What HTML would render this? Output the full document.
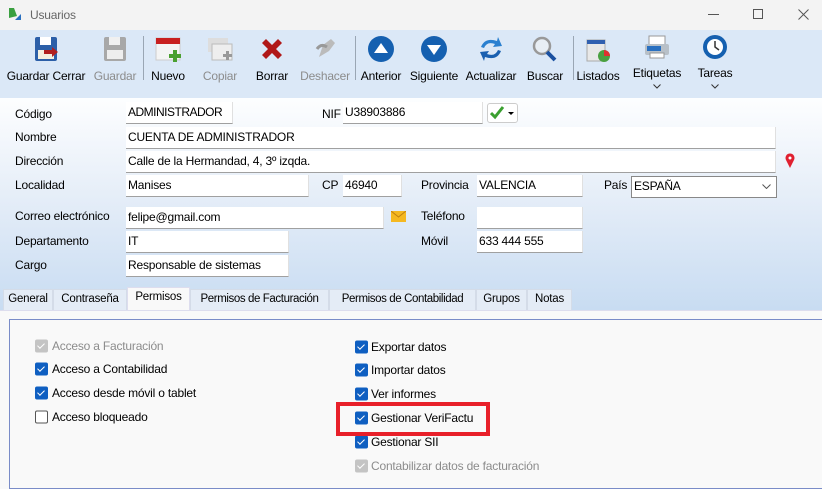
<!DOCTYPE html>
<html><head><meta charset="utf-8"><style>
*{margin:0;padding:0;box-sizing:border-box}
body{width:822px;height:482px;overflow:hidden;font-family:"Liberation Sans",sans-serif;font-size:12px;letter-spacing:-0.2px;color:#000;position:relative;background:#f9f9f9}
.a{position:absolute;white-space:nowrap}
#title{left:0;top:0;width:822px;height:30px;background:#f3f3f3}
#tb{left:0;top:30px;width:822px;height:68px;background:#dbe8f7}
#form{left:0;top:98px;width:822px;height:212px;background:linear-gradient(#fdfeff,#e6eef8 45%,#c8dcf2)}
.lbl{position:absolute;white-space:nowrap;transform:translateY(-50%)}
.inp{position:absolute;background:#fff;border-bottom:1px solid #a0a0a0;border-right:1px solid #e0e0e0;padding-left:2px;line-height:20px;height:22px;white-space:nowrap;overflow:hidden}
.btn{position:absolute;top:76px;transform:translate(-50%,-50%);white-space:nowrap}
.ico{position:absolute;top:35px;width:28px;height:28px;transform:translateX(-50%)}
.dis{color:#8c8c8c}
.sep{position:absolute;top:36px;width:1px;height:44px;background:#9aa6b4}
.tab{position:absolute;top:289px;height:21px;background:#e4ecf6;border:1px solid #d4dce8;border-bottom:none;line-height:19px;text-align:center;white-space:nowrap;overflow:hidden;font-size:11.5px}
.cb{position:absolute;width:13px;height:13px;border-radius:2px;background:#0f5fc1;transform:translateY(-50%)}
.cb::after{content:"";position:absolute;left:4px;top:2px;width:3px;height:6px;border:solid #fff;border-width:0 1.3px 1.3px 0;transform:rotate(45deg)}
.cb.g{background:#c4c4c4}
.cb.e{background:#fff;border:1px solid #555}
.cb.e::after{display:none}
</style></head><body>
<div id="title" class="a">
<svg class="a" style="left:8px;top:7px" width="14" height="14"><path d="M1 1 L6 1 L9 9 L1 11Z" fill="#3aa040"/><path d="M13 7 L13 13 L7 13Z" fill="#2a70c0"/></svg>
<span class="a" style="left:30px;top:8px;color:#666">Usuarios</span>
<div class="a" style="left:708px;top:14px;width:11px;height:1px;background:#555"></div>
<div class="a" style="left:753px;top:9px;width:10px;height:10px;border:1px solid #555"></div>
<svg class="a" style="left:798px;top:9px" width="11" height="11"><path d="M0.5 0.5l10 10M10.5 0.5l-10 10" stroke="#555"/></svg>
</div>
<div id="tb" class="a"></div>
<svg class="ico" style="left:46px" viewBox="0 0 28 28"><rect x="3" y="2" width="22" height="24" rx="2" fill="#2c5fa8"/><rect x="8" y="2" width="11" height="8" fill="#fff"/><rect x="6" y="15" width="16" height="9" fill="#f4f0e0"/><path d="M12 15h8v-3l6 5-6 5v-3h-8z" fill="#b02020"/></svg>
<svg class="ico" style="left:115px" viewBox="0 0 28 28"><rect x="3" y="2" width="22" height="24" rx="2" fill="#a8a8a8"/><rect x="8" y="2" width="11" height="8" fill="#f0f0f0"/><rect x="6" y="15" width="16" height="9" fill="#eee"/></svg>
<div class="sep" style="left:143px"></div>
<svg class="ico" style="left:168px" viewBox="0 0 28 28"><rect x="2" y="3" width="24" height="22" fill="#f4f4f4" stroke="#ccc"/><rect x="2" y="3" width="24" height="6" fill="#c82020"/><path d="M15 19h4v-4h4v4h4v4h-4v4h-4v-4h-4z" fill="#4aa030"/></svg>
<svg class="ico" style="left:220px" viewBox="0 0 28 28"><rect x="2" y="3" width="20" height="14" fill="#ddd"/><rect x="6" y="9" width="20" height="16" fill="#eee" stroke="#bbb"/><path d="M17 19h3v-3h3v3h3v3h-3v3h-3v-3h-3z" fill="#999"/></svg>
<svg class="ico" style="left:272px" viewBox="0 0 28 28"><path d="M4 8l4-4 6 6 6-6 4 4-6 6 6 6-4 4-6-6-6 6-4-4 6-6z" fill="#b01818"/></svg>
<svg class="ico" style="left:325px" viewBox="0 0 28 28"><path d="M8 22l4-12 8-6 4 4-6 8z" fill="#bbb"/><path d="M6 14q4-6 10-2" stroke="#999" stroke-width="3" fill="none"/></svg>
<div class="sep" style="left:355px"></div>
<svg class="ico" style="left:381px" viewBox="0 0 28 28"><circle cx="14" cy="14" r="13" fill="#1560b0"/><path d="M7 18L14 8L21 18Z" fill="#fff"/></svg>
<svg class="ico" style="left:434px" viewBox="0 0 28 28"><circle cx="14" cy="14" r="13" fill="#1560b0"/><path d="M7 10L14 20L21 10Z" fill="#fff"/></svg>
<svg class="ico" style="left:491px" viewBox="0 0 28 28"><path d="M4 12q4-10 16-6l1-4 4 9-9 1 2-3q-8-3-11 4z" fill="#2a80d0"/><path d="M24 16q-4 10-16 6l-1 4-4-9 9-1-2 3q8 3 11-4z" fill="#1a60b0"/></svg>
<svg class="ico" style="left:545px" viewBox="0 0 28 28"><circle cx="11" cy="11" r="8" fill="#e8eef4" stroke="#999" stroke-width="2.5"/><path d="M16 17l8 8" stroke="#1a50a0" stroke-width="4"/></svg>
<div class="sep" style="left:573px"></div>
<svg class="ico" style="left:598px" viewBox="0 0 28 28"><rect x="3" y="5" width="18" height="21" fill="#e8e8e8" stroke="#aaa"/><rect x="3" y="5" width="18" height="4" fill="#3060b0"/><circle cx="20" cy="21" r="6" fill="#4aa040"/><path d="M20 21V15a6 6 0 0 1 6 6z" fill="#e03030"/></svg>
<svg class="ico" style="left:657px;top:33px" viewBox="0 0 28 28"><rect x="6" y="3" width="16" height="9" fill="#fff" stroke="#999"/><rect x="2" y="11" width="24" height="11" rx="2" fill="#b8c0c8"/><rect x="4" y="13" width="14" height="5" fill="#2a70c0"/><rect x="7" y="20" width="14" height="5" fill="#fff" stroke="#999"/></svg>
<svg class="ico" style="left:715px;top:33px" viewBox="0 0 28 28"><circle cx="14" cy="14" r="12" fill="#1560b0"/><circle cx="14" cy="14" r="8" fill="#fff"/><path d="M14 8v6l4 3" stroke="#333" stroke-width="1.5" fill="none"/></svg>
<span class="btn" style="left:46px">Guardar Cerrar</span>
<span class="btn dis" style="left:115px">Guardar</span>
<span class="btn" style="left:168px">Nuevo</span>
<span class="btn dis" style="left:220px">Copiar</span>
<span class="btn" style="left:272px">Borrar</span>
<span class="btn dis" style="left:325px">Deshacer</span>
<span class="btn" style="left:381px">Anterior</span>
<span class="btn" style="left:434px">Siguiente</span>
<span class="btn" style="left:491px">Actualizar</span>
<span class="btn" style="left:545px">Buscar</span>
<span class="btn" style="left:598px">Listados</span>
<span class="btn" style="left:657px;top:73px">Etiquetas</span>
<span class="btn" style="left:715px;top:73px">Tareas</span>
<svg class="a" style="left:653px;top:84px" width="8" height="5"><path d="M0.5 0.5l3.5 3.5 3.5-3.5" stroke="#333" fill="none"/></svg>
<svg class="a" style="left:711px;top:84px" width="8" height="5"><path d="M0.5 0.5l3.5 3.5 3.5-3.5" stroke="#333" fill="none"/></svg>

<div id="form" class="a"></div>
<span class="lbl" style="left:15px;top:114px">Código</span>
<span class="lbl" style="left:15px;top:137px">Nombre</span>
<span class="lbl" style="left:15px;top:161px">Dirección</span>
<span class="lbl" style="left:15px;top:185px">Localidad</span>
<span class="lbl" style="left:15px;top:216px">Correo electrónico</span>
<span class="lbl" style="left:15px;top:241px">Departamento</span>
<span class="lbl" style="left:15px;top:265px">Cargo</span>
<span class="lbl" style="left:322px;top:114px">NIF</span>
<span class="lbl" style="left:322px;top:185px">CP</span>
<span class="lbl" style="left:421px;top:185px">Provincia</span>
<span class="lbl" style="left:604px;top:185px">País</span>
<span class="lbl" style="left:421px;top:216px">Teléfono</span>
<span class="lbl" style="left:421px;top:241px">Móvil</span>
<div class="inp" style="left:126px;top:102px;width:107px;letter-spacing:-0.5px">ADMINISTRADOR</div>
<div class="inp" style="left:343px;top:102px;width:140px">U38903886</div>
<div class="a" style="left:487px;top:103px;width:31px;height:20px;background:#fff;border:1px solid #ccc;border-radius:3px"></div>
<svg class="a" style="left:490px;top:106px" width="26" height="14"><path d="M1 7l4 4 8-10" stroke="#3aa030" stroke-width="3" fill="none"/><path d="M18 6h6l-3 3z" fill="#000"/></svg>
<div class="inp" style="left:126px;top:127px;width:650px">CUENTA DE ADMINISTRADOR</div>
<div class="inp" style="left:126px;top:151px;width:650px">Calle de la Hermandad, 4, 3º izqda.</div>
<svg class="a" style="left:784px;top:153px" width="12" height="16"><path d="M6 15L2 7a4.5 4.5 0 1 1 8 0z" fill="#e02030"/><circle cx="6" cy="5" r="1.5" fill="#fff"/></svg>
<div class="inp" style="left:126px;top:175px;width:183px">Manises</div>
<div class="inp" style="left:343px;top:175px;width:59px">46940</div>
<div class="inp" style="left:477px;top:175px;width:106px">VALENCIA</div>
<div class="inp" style="left:631px;top:176px;width:146px;border:1px solid #888;line-height:19px">ESPAÑA</div>
<svg class="a" style="left:762px;top:184px" width="9" height="5"><path d="M0.5 0.5l4 4 4-4" stroke="#555" fill="none"/></svg>
<div class="inp" style="left:126px;top:207px;width:258px">felipe@gmail.com</div>
<svg class="a" style="left:391px;top:211px" width="15" height="11"><rect width="15" height="11" fill="#f5b820"/><path d="M0 0l7.5 6 7.5-6" stroke="#c08010" fill="none"/></svg>
<div class="inp" style="left:477px;top:207px;width:106px"></div>
<div class="inp" style="left:126px;top:231px;width:163px">IT</div>
<div class="inp" style="left:477px;top:231px;width:106px">633 444 555</div>
<div class="inp" style="left:126px;top:255px;width:163px">Responsable de sistemas</div>

<div class="tab" style="left:3px;width:50px">General</div>
<div class="tab" style="left:53px;width:74px">Contraseña</div>
<div class="tab" style="left:127px;width:63px;top:287px;height:24px;background:#f9f9f9;border-color:#dde">Permisos</div>
<div class="tab" style="left:190px;width:139px;letter-spacing:-0.4px">Permisos de Facturación</div>
<div class="tab" style="left:329px;width:147px;letter-spacing:-0.4px">Permisos de Contabilidad</div>
<div class="tab" style="left:476px;width:51px">Grupos</div>
<div class="tab" style="left:527px;width:45px">Notas</div>
<div class="a" style="left:0;top:310px;width:822px;height:1px;background:#dde"></div>
<div class="a" style="left:9px;top:319px;width:820px;height:170px;border:1px solid #7a8cc8"></div>

<div class="cb g" style="left:35px;top:346px"></div><span class="lbl dis" style="left:52px;top:346px">Acceso a Facturación</span>
<div class="cb" style="left:35px;top:369px"></div><span class="lbl" style="left:52px;top:369px">Acceso a Contabilidad</span>
<div class="cb" style="left:35px;top:393px"></div><span class="lbl" style="left:52px;top:393px">Acceso desde móvil o tablet</span>
<div class="cb e" style="left:35px;top:417px"></div><span class="lbl" style="left:52px;top:417px">Acceso bloqueado</span>
<div class="cb" style="left:355px;top:347px"></div><span class="lbl" style="left:371px;top:347px">Exportar datos</span>
<div class="cb" style="left:355px;top:370px"></div><span class="lbl" style="left:371px;top:370px">Importar datos</span>
<div class="cb" style="left:355px;top:394px"></div><span class="lbl" style="left:371px;top:394px">Ver informes</span>
<div class="cb" style="left:355px;top:418px"></div><span class="lbl" style="left:371px;top:418px">Gestionar VeriFactu</span>
<div class="cb" style="left:355px;top:442px"></div><span class="lbl" style="left:371px;top:442px">Gestionar SII</span>
<div class="cb g" style="left:355px;top:466px"></div><span class="lbl dis" style="left:371px;top:466px">Contabilizar datos de facturación</span>
<div class="a" style="left:336px;top:402px;width:154px;height:34px;border:4px solid #e8202a"></div>
</body></html>
